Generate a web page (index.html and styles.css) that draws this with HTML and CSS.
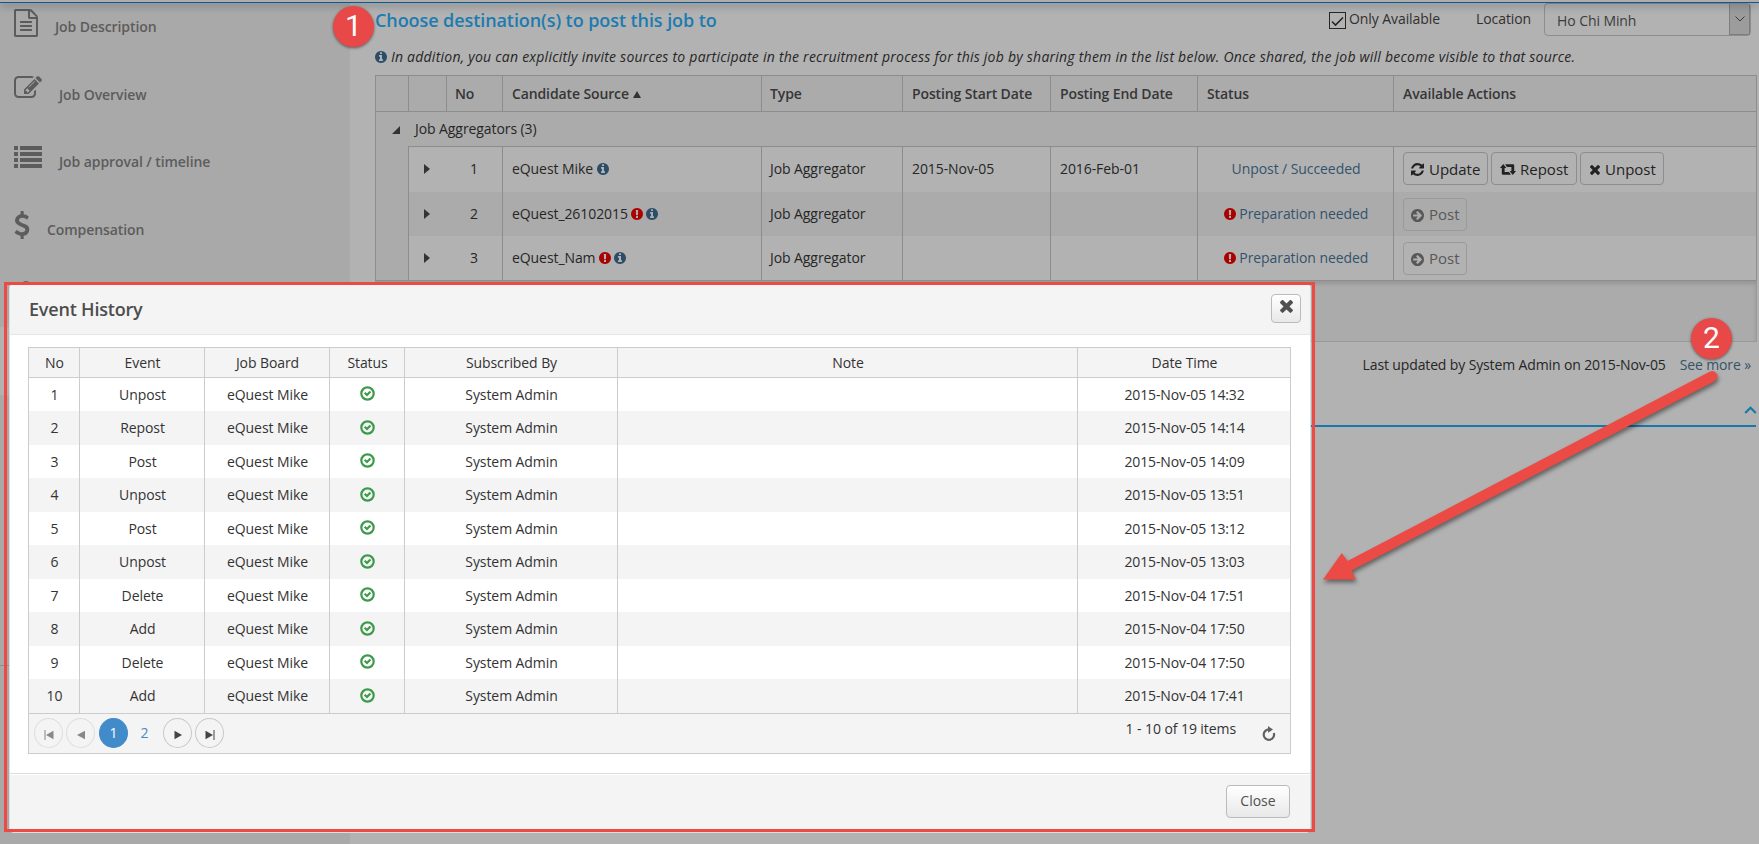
FILE: index.html
```html
<!DOCTYPE html>
<html lang="en">
<head>
  <meta charset="UTF-8" />
  <title>Event History</title>
  <meta name="viewport" content="width=device-width, initial-scale=1.0" />
  <link rel="stylesheet" href="styles.css">
</head>
<body>
  <svg class="sprite">
    <symbol id="i-file" viewBox="0 0 1792 1792"><path d="M1596 380q28 28 48 76t20 88v1152q0 40-28 68t-68 28h-1344q-40 0-68-28t-28-68v-1600q0-40 28-68t68-28h896q40 0 88 20t76 48zm-444-244v376h376q-10-29-22-41l-313-313q-12-12-41-22zm384 1528v-1024h-416q-40 0-68-28t-28-68v-416h-768v1536h1280zm-1024-864q0-14 9-23t23-9h704q14 0 23 9t9 23v64q0 14-9 23t-23 9h-704q-14 0-23-9t-9-23v-64zm736 224q14 0 23 9t9 23v64q0 14-9 23t-23 9h-704q-14 0-23-9t-9-23v-64q0-14 9-23t23-9h704zm0 256q14 0 23 9t9 23v64q0 14-9 23t-23 9h-704q-14 0-23-9t-9-23v-64q0-14 9-23t23-9h704z"/></symbol>
    <symbol id="i-edit" viewBox="0 0 1792 1792"><path d="M888 1184l116-116-152-152-116 116v56h96v96h56zm440-720q-16-16-33 1l-350 350q-17 17-1 33t33-1l350-350q17-17 1-33zm80 594v190q0 119-84.5 203.5t-203.5 84.5h-832q-119 0-203.5-84.5t-84.5-203.5v-832q0-119 84.5-203.5t203.5-84.5h832q63 0 117 25 15 7 18 23 3 17-9 29l-49 49q-14 14-32 8-23-6-45-6h-832q-66 0-113 47t-47 113v832q0 66 47 113t113 47h832q66 0 113-47t47-113v-126q0-13 9-22l64-64q15-15 35-7t20 29zm-96-738l288 288-672 672h-288v-288zm444 132l-92 92-288-288 92-92q28-28 68-28t68 28l152 152q28 28 28 68t-28 68z"/></symbol>
    <symbol id="i-list" viewBox="0 0 28 22"><path d="M0 0h4v4H0zM6 0h22v4H6zM0 6h4v4H0zM6 6h22v4H6zM0 12h4v4H0zM6 12h22v4H6zM0 18h4v4H0zM6 18h22v4H6z"/></symbol>
    <symbol id="i-dollar" viewBox="0 0 1792 1792"><path d="M1362 1185q0 153-99.5 263.5t-258.5 136.5v175q0 14-9 23t-23 9h-135q-13 0-22.5-9.5t-9.5-22.5v-175q-66-9-127.5-31t-101.5-44.5-74-48-46.5-37.5-17.5-18q-17-21-2-41l103-135q7-10 23-12 15-2 24 9l2 2q113 99 243 125 37 8 74 8 81 0 142.5-43t61.5-122q0-28-15-53t-33.5-42-58.5-37.5-66-32-80-32.5q-39-16-61.5-25t-61.5-26.5-62.5-31-56.5-35.5-53.5-42.5-43.5-49-35.5-58-21-66.5-8.5-78q0-138 98-242t255-134v-180q0-13 9.5-22.5t22.5-9.5h135q14 0 23 9t9 23v176q57 6 110.5 23t87 33.5 63.5 37.5 39 29 15 14q17 18 5 38l-81 146q-8 15-23 16-14 3-27-7-3-3-14.5-12t-39-26.5-58.5-32-74.5-26-85.5-11.5q-95 0-155 43t-60 111q0 26 8.500 48t29.500 41.500 39.500 33 56 31 60.500 27 70 27.500q53 20 81 31.500t76 35 75.500 42.500 62 50 53 63.500 31.500 76.500 13 94z"/></symbol>
    <symbol id="i-info" viewBox="128 128 1536 1536"><path d="M1152 1376v-160q0-14-9-23t-23-9h-96v-512q0-14-9-23t-23-9h-320q-14 0-23 9t-9 23v160q0 14 9 23t23 9h96v320h-96q-14 0-23 9t-9 23v160q0 14 9 23t23 9h448q14 0 23-9t9-23zm-128-896v-160q0-14-9-23t-23-9h-192q-14 0-23 9t-9 23v160q0 14 9 23t23 9h192q14 0 23-9t9-23zm640 416q0 209-103 385.5t-279.5 279.5-385.5 103-385.5-103-279.5-279.5-103-385.5 103-385.5 279.5-279.5 385.5-103 385.5 103 279.5 279.5 103 385.5z"/></symbol>
    <symbol id="i-warn" viewBox="128 128 1536 1536"><path d="M896 128q209 0 385.5 103t279.5 279.5 103 385.5-103 385.5-279.5 279.5-385.5 103-385.5-103-279.5-279.5-103-385.5 103-385.5 279.5-279.5 385.5-103zm128 1247v-190q0-14-9-23.5t-22-9.5h-192q-13 0-23 10t-10 23v190q0 13 10 23t23 10h192q13 0 22-9.5t9-23.5zm-2-344l18-621q0-12-10-18-10-8-24-8h-220q-14 0-24 8-10 6-10 18l17 621q0 10 10 17.5t24 7.5h185q14 0 23.5-7.5t10.5-17.5z"/></symbol>
    <symbol id="i-refresh" viewBox="128 128 1536 1536"><path d="M1639 1056q0 5-1 7-64 268-268 434.5t-478 166.5q-146 0-282.5-55t-243.5-157l-129 129q-19 19-45 19t-45-19-19-45v-448q0-26 19-45t45-19h448q26 0 45 19t19 45-19 45l-137 137q71 66 161 102t187 36q134 0 250-65t186-179q11-17 53-117 8-23 30-23h192q13 0 22.5 9.5t9.5 22.5zm25-800v448q0 26-19 45t-45 19h-448q-26 0-45-19t-19-45 19-45l138-138q-148-137-349-137-134 0-250 65t-186 179q-11 17-53 117-8 23-30 23h-199q-13 0-22.5-9.5t-9.5-22.5v-7q65-268 270-434.5t480-166.5q146 0 284 55.5t245 156.5l130-129q19-19 45-19t45 19 19 45z"/></symbol>
    <symbol id="i-retweet" viewBox="0 0 16 11"><path d="M3.200 0L6.400 4H4.600V8H9L11 10.800H3Q1.800 10.800 1.800 9.800V4H0zM12.800 11L9.600 7H11.400V3H7L5 .2H13Q14.200 .2 14.200 1.200V7H16z"/></symbol>
    <symbol id="i-times" viewBox="302 374 1188 1188"><path d="M1490 1322q0 40-28 68l-136 136q-28 28-68 28t-68-28l-294-294-294 294q-28 28-68 28t-68-28l-136-136q-28-28-28-68t28-68l294-294-294-294q-28-28-28-68t28-68l136-136q28-28 68-28t68 28l294 294 294-294q28-28 68-28t68 28l136 136q28 28 28 68t-28 68l-294 294 294 294q28 28 28 68z"/></symbol>
    <symbol id="i-arrow" viewBox="128 128 1536 1536"><path d="M1413 896q0-27-18-45l-91-91-362-362q-18-18-45-18t-45 18l-91 91q-18 18-18 45t18 45l189 189h-502q-26 0-45 19t-19 45v128q0 26 19 45t45 19h502l-189 189q-19 19-19 45t19 45l91 91q18 18 45 18t45-18l362-362 91-91q18-18 18-45zm251 0q0 209-103 385.5t-279.5 279.5-385.5 103-385.5-103-279.5-279.5-103-385.5 103-385.5 279.5-279.5 385.5-103 385.5 103 279.5 279.5 103 385.5z"/></symbol>
    <symbol id="i-ok" viewBox="0 0 15 15"><circle cx="7.5" cy="7.5" r="6.2" fill="none" stroke="currentColor" stroke-width="2.2"/><path d="M3.900 7.600L5.400 6.100L6.900 7.400L9.700 4.700L11.200 6.200L7 10.500z"/></symbol>
  </svg>

  <div class="page">
    <div class="topbar"></div>
    <aside>
      <a class="nav file"><svg><use href="#i-file"/></svg>Job Description</a>
      <a class="nav edit"><svg><use href="#i-edit"/></svg>Job Overview</a>
      <a class="nav list"><svg><use href="#i-list"/></svg>Job approval / timeline</a>
      <a class="nav dollar"><svg><use href="#i-dollar"/></svg>Compensation</a>
      <div class="nav-more"></div>
      <div class="nav-active"></div>
      <div class="nav-rest"></div>
    </aside>

    <main>
      <div class="heading">
        <h2>Choose destination(s) to post this job to</h2>
        <span class="check"><svg viewBox="0 0 15 15"><path d="M2 8.500l3.500 3.500 7.500-7.500" fill="none" stroke="currentColor" stroke-width="1.600"/></svg></span>
        <label>Only Available</label>
        <label class="loc">Location</label>
        <div class="select"><span>Ho Chi Minh</span><i><svg viewBox="0 0 10 6"><path d="M.5.5L5 5 9.500.5" fill="none" stroke="currentColor"/></svg></i></div>
      </div>
      <p class="hint"><svg class="ico info"><use href="#i-info"/></svg> <em>In addition, you can explicitly invite sources to participate in the recruitment process for this job by sharing them in the list below. Once shared, the job will become visible to that source.</em></p>

      <table class="sources">
        <colgroup><col class="s1"><col class="s2"><col class="s3"><col class="s4"><col class="s5"><col class="s6"><col class="s7"><col class="s8"><col></colgroup>
        <tr class="head">
          <th></th><th></th><th>No</th><th>Candidate Source <i class="sort"></i></th><th>Type</th><th>Posting Start Date</th><th>Posting End Date</th><th>Status</th><th>Available Actions</th>
        </tr>
        <tr class="group"><td colspan="9"><i class="open"></i>Job Aggregators (3)</td></tr>
        <tr class="r1">
          <td></td><td><i class="closed"></i></td><td>1</td><td>eQuest Mike <svg class="ico info"><use href="#i-info"/></svg></td><td>Job Aggregator</td><td>2015-Nov-05</td><td>2016-Feb-01</td>
          <td><a>Unpost / Succeeded</a></td>
          <td><div class="actions"><button class="upd"><svg><use href="#i-refresh"/></svg>Update</button><button class="rep"><svg><use href="#i-retweet"/></svg>Repost</button><button class="unp"><svg><use href="#i-times"/></svg>Unpost</button></div></td>
        </tr>
        <tr class="r2">
          <td></td><td><i class="closed"></i></td><td>2</td><td>eQuest_26102015 <svg class="ico warn"><use href="#i-warn"/></svg><svg class="ico info next"><use href="#i-info"/></svg></td><td>Job Aggregator</td><td></td><td></td>
          <td><svg class="ico warn"><use href="#i-warn"/></svg> <a>Preparation needed</a></td>
          <td><div class="actions"><button class="post" disabled><svg><use href="#i-arrow"/></svg>Post</button></div></td>
        </tr>
        <tr class="r3">
          <td></td><td><i class="closed"></i></td><td>3</td><td>eQuest_Nam <svg class="ico warn"><use href="#i-warn"/></svg><svg class="ico info next"><use href="#i-info"/></svg></td><td>Job Aggregator</td><td></td><td></td>
          <td><svg class="ico warn"><use href="#i-warn"/></svg> <a>Preparation needed</a></td>
          <td><div class="actions"><button class="post" disabled><svg><use href="#i-arrow"/></svg>Post</button></div></td>
        </tr>
      </table>
      <div class="sources-foot"></div>
      <p class="updated"><span>Last updated by System Admin on 2015-Nov-05</span><a>See more »</a></p>
      <div class="section"><svg viewBox="0 0 13 8"><path d="M1.200 7L6.500 1.800 11.800 7" fill="none" stroke="currentColor" stroke-width="2.200"/></svg></div>
    </main>
  </div>

  <div class="modal">
    <header>
      <h3>Event History</h3>
      <button class="x"><svg><use href="#i-times"/></svg></button>
    </header>
    <div class="body">
      <table class="events">
        <colgroup><col class="c1"><col class="c2"><col class="c2"><col class="c3"><col class="c4"><col><col class="c4"></colgroup>
        <thead><tr><th>No</th><th>Event</th><th>Job Board</th><th>Status</th><th>Subscribed By</th><th>Note</th><th>Date Time</th></tr></thead>
        <tbody id="events"></tbody>
      </table>
      <div class="pager">
        <span class="pg off"><svg viewBox="0 0 10 10"><path d="M.5 0h1v10h-1zM9.500 .8v8.400L2 5z"/></svg></span>
        <span class="pg off"><svg viewBox="0 0 10 10"><path d="M9 .8v8.400L1 5z"/></svg></span>
        <span class="pg current">1</span>
        <span class="pg num">2</span>
        <span class="pg"><svg viewBox="0 0 10 10"><path d="M1.500 .8v8.400L9 5z"/></svg></span>
        <span class="pg"><svg viewBox="0 0 10 10"><path d="M8.500 0h1v10h-1zM.5 .8v8.400L8 5z"/></svg></span>
        <span class="count">1 - 10 of 19 items</span>
        <svg class="reload" viewBox="0 0 14 15"><path d="M7.500 3.500A5.200 5.200 0 1 0 11.800 7" fill="none" stroke="currentColor" stroke-width="2.200"/><path d="M6 0L11 3.600 6 6.800z"/></svg>
      </div>
    </div>
    <footer><button>Close</button></footer>
  </div>

  <div class="frame"></div>
  <div class="step one">1</div>
  <svg class="pointer" viewBox="0 0 420 230">
    <path d="M387 6.500L24.500 196L18.800 188L0 214.500H33L28.500 205.500L391 16.500Q396 13 394 9Q391 4.500 387 6.500z"/>
  </svg>
  <div class="step two">2</div>

  <script>
    const events = [
      ['Unpost', '2015-Nov-05 14:32'],
      ['Repost', '2015-Nov-05 14:14'],
      ['Post', '2015-Nov-05 14:09'],
      ['Unpost', '2015-Nov-05 13:51'],
      ['Post', '2015-Nov-05 13:12'],
      ['Unpost', '2015-Nov-05 13:03'],
      ['Delete', '2015-Nov-04 17:51'],
      ['Add', '2015-Nov-04 17:50'],
      ['Delete', '2015-Nov-04 17:50'],
      ['Add', '2015-Nov-04 17:41']
    ];

    const body = document.getElementById('events');
    events.forEach(([event, time], i) => {
      const row = document.createElement('tr');
      row.innerHTML = `
        <td>${i + 1}</td>
        <td>${event}</td>
        <td>eQuest Mike</td>
        <td><svg class="ok"><use href="#i-ok"/></svg></td>
        <td>System Admin</td>
        <td></td>
        <td>${time}</td>
      `;
      body.appendChild(row);
    });
  </script>
</body>
</html>
```

FILE: styles.css
```css
* {
  box-sizing: border-box;
}
body {
  margin: 0;
  width: 1759px;
  height: 844px;
  overflow: hidden;
  position: relative;
  font-family: 'Open Sans', sans-serif;
  font-size: 14px;
  line-height: 20px;
  letter-spacing: -0.08px;
  color: #262626;
  background: #b2b2b2;
}
h2, h3, p {
  margin: 0;
}
svg {
  fill: currentColor;
}
button {
  font-family: inherit;
}
.sprite {
  display: none;
}
.page {
  display: flex;
  height: 844px;
}
.topbar {
  position: absolute;
  top: 0;
  left: 0;
  width: 100%;
  height: 3px;
  background: #aeaeae;
  border-bottom: 1px solid #0a5a96;
  box-shadow: 0 2px 8px rgba(0, 0, 0, 0.4);
}

/* left menu */
aside {
  width: 350px;
  background: #a9a9a9;
  color: #5c5c5c;
  padding-top: 3px;
}
.nav {
  display: flex;
  height: 68px;
  padding-left: 14px;
  font-weight: 600;
}
.nav svg {
  flex: none;
}
.file {
  padding-top: 14px;
  height: 67px;
}
.file svg {
  width: 28px;
  height: 28px;
  margin: -8px 15px 0 -2px;
}
.edit {
  padding-top: 15px;
}
.edit svg {
  width: 28px;
  height: 28px;
  margin: -11px 17px 0 0;
}
.list {
  padding-top: 14px;
}
.list svg {
  width: 28px;
  height: 22px;
  margin: -6px 17px 0 0;
}
.dollar {
  padding-top: 14px;
}
.dollar svg {
  width: 28px;
  height: 28px;
  margin: -9px 11px 0 -6px;
}
.nav-more {
  width: 10px;
  height: 10px;
  margin: 7px 0 0 21px;
  border-radius: 5px;
  background: #666;
}
.nav-active {
  height: 68px;
  margin-top: 36px;
  background: #b2b2b2;
}
.nav-rest {
  height: 271px;
  border-bottom: 1px solid #8d8d8d;
}

/* right part */
main {
  width: 1382px;
  margin-left: 25px;
}
.heading {
  display: flex;
  height: 36px;
}
.heading h2 {
  font-size: 18px;
  font-weight: 600;
  line-height: 24px;
  padding-top: 8px;
  width: 954px;
  color: #1c7bb0;
}
.check {
  width: 17px;
  height: 17px;
  margin: 12px 3px 0 0;
  border: 1px solid #262626;
}
.check svg {
  display: block;
  width: 15px;
  height: 15px;
}
.heading label {
  padding-top: 9px;
  width: 127px;
  color: #303030;
}
.heading .loc {
  width: 68px;
}
.select {
  display: flex;
  justify-content: space-between;
  width: 207px;
  height: 33px;
  margin-top: 3px;
  border: 1px solid #8d8d8d;
  border-radius: 4px;
  padding-left: 12px;
  line-height: 33px;
  color: #3c3c3c;
}
.select i {
  width: 21px;
  background: #9c9c9c;
  border: 1px solid #7d7d7d;
  border-top: 0;
  display: flex;
  align-items: center;
  justify-content: center;
}
.select i svg {
  width: 10px;
  height: 6px;
}
.hint {
  height: 39px;
  padding-top: 11px;
  white-space: nowrap;
  letter-spacing: 0.235px;
}
.ico {
  width: 12px;
  height: 12px;
  vertical-align: -1px;
}
.info {
  color: #2b4d68;
}
.warn {
  color: #ab0000;
}
.next {
  margin-left: 3px;
}
.sources {
  table-layout: fixed;
  width: 1382px;
  border-spacing: 0;
  border-right: 1px solid #8d8d8d;
}
.s1 { width: 33px; }
.s2 { width: 38px; }
.s3 { width: 56px; }
.s4 { width: 259px; }
.s5 { width: 141px; }
.s6 { width: 148px; }
.s7 { width: 147px; }
.s8 { width: 196px; }
.sources th, .sources td {
  padding: 0 0 0 9px;
  text-align: left;
  border-left: 1px solid #8d8d8d;
}
.sources th {
  height: 37px;
  font-weight: 600;
  letter-spacing: -0.12px;
  color: #363636;
  border-top: 1px solid #8d8d8d;
  border-bottom: 1px solid #8d8d8d;
}
.head, .group, .r2 {
  background: #ababab;
}
.sources th:nth-child(3) {
  padding-left: 8px;
}
.sources th:nth-child(5), .sources td:nth-child(5) {
  padding-left: 8px;
}
.group td {
  height: 34px;
}
.sources .r1 td {
  height: 46px;
  padding-bottom: 2px;
  border-top: 1px solid #8d8d8d;
}
.r2 td {
  height: 44px;
}
.r3 td {
  height: 45px;
  border-bottom: 1px solid #8d8d8d;
}
.sources td:first-child {
  background: #ababab;
}
.sources .r1 td:first-child {
  border-top: 0;
}
.sources td:nth-child(2) {
  padding-left: 15px;
}
.sources td:nth-child(3) {
  border-left: 0;
  text-align: center;
  padding-left: 0;
}
.sources td:nth-child(8) {
  text-align: center;
  padding-left: 1px;
}
.sources a, .updated a {
  color: #34536b;
}
.sort {
  display: inline-block;
  border: 4px solid transparent;
  border-top: 0;
  border-bottom: 7px solid #333;
  margin-left: 1px;
  vertical-align: 1px;
}
.open {
  display: inline-block;
  border-left: 8px solid transparent;
  border-bottom: 8px solid #333;
  margin: 0 15px 0 7px;
}
.closed {
  display: block;
  width: 0;
  border: 5px solid transparent;
  border-left: 6px solid #333;
  border-right: 0;
}
.actions {
  display: flex;
  gap: 3px;
}
.actions button {
  height: 33px;
  padding: 0 0 0 7px;
  border: 1px solid #8d8d8d;
  border-radius: 4px;
  background: transparent;
  font-size: 15px;
  color: #222;
  display: flex;
  align-items: center;
}
.actions .upd { width: 85px; }
.actions .rep { width: 86px; padding-left: 8px; }
.actions .unp { width: 84px; padding-left: 9px; }
.actions .post {
  width: 64px;
  color: #585858;
  border-color: #9a9a9a;
}
.actions svg {
  width: 13px;
  height: 13px;
  margin: 2px 5px 0 0;
}
.actions .rep svg {
  width: 16px;
  height: 11px;
  margin-right: 4px;
}
.actions .unp svg {
  width: 10px;
  height: 10px;
}
.sources-foot {
  height: 61px;
  background: #ababab;
  border: 1px solid #999;
  border-top: 0;
  box-shadow: inset 0 3px 4px rgba(0, 0, 0, 0.12);
}
.updated {
  display: flex;
  justify-content: flex-end;
  gap: 14px;
  padding: 13px 6px 0 0;
  letter-spacing: -0.13px;
}
.section {
  width: 1381px;
  height: 52px;
  border-bottom: 2px solid #1878ab;
  color: #1878ab;
  display: flex;
  justify-content: flex-end;
}
.section svg {
  width: 13px;
  height: 8px;
  margin: 31px -1px 0 0;
}

/* popup */
.modal {
  position: absolute;
  left: 9px;
  top: 283px;
  width: 1302px;
  height: 550px;
  border: 1px solid #ddd;
  border-radius: 5px;
  background: #fff;
  color: #333;
  overflow: hidden;
  display: flex;
  flex-direction: column;
}
.modal header {
  height: 51px;
  background: #f4f4f4;
  border-bottom: 1px solid #e5e5e5;
  display: flex;
  justify-content: space-between;
  padding: 0 19px 0 19px;
}
.modal h3 {
  font-size: 18px;
  font-weight: 600;
  line-height: 24px;
  letter-spacing: -0.2px;
  padding-top: 13px;
  color: #4d4d4d;
}
.modal button {
  border: 1px solid #bbb;
  border-radius: 4px;
  background: linear-gradient(#fff, #e8e8e8);
  color: #505050;
  padding: 0;
}
.modal .x {
  width: 30px;
  height: 29px;
  margin: 10px -10px 0 0;
  padding-bottom: 2px;
}
.x svg {
  width: 13px;
  height: 13px;
}
.body {
  width: 1263px;
  margin: 12px 0 0 18px;
  border: 1px solid #ccc;
  border-left: 0;
}
.events {
  table-layout: fixed;
  width: 1262px;
  border-spacing: 0;
}
.c1 { width: 51px; }
.c2 { width: 125px; }
.c3 { width: 75px; }
.c4 { width: 213px; }
.events th, .events td {
  padding: 0 0 0 1px;
  text-align: center;
  font-weight: 400;
  border-left: 1px solid #ccc;
}
.events th {
  height: 30px;
  background: #f4f4f4;
  border-bottom: 1px solid #ccc;
}
.events td {
  height: 33px;
}
.events td:last-child {
  letter-spacing: -0.13px;
}
.events tr:nth-child(even) td {
  height: 34px;
  background: #f4f4f4;
}
.ok {
  width: 15px;
  height: 15px;
  display: block;
  margin: -2px auto 0;
  color: #3c9a4b;
}
.pager {
  height: 40px;
  background: #f4f4f4;
  border: 1px solid #ccc;
  border-width: 1px 0 0 1px;
  display: flex;
  gap: 3px;
  padding: 4px 14px 0 5px;
}
.pg {
  width: 29px;
  height: 30px;
  border: 1px solid #c8c8c8;
  border-radius: 50%;
  display: flex;
  align-items: center;
  justify-content: center;
  color: #444;
}
.pg svg {
  width: 10px;
  height: 10px;
  margin-top: 4px;
}
.off {
  border-color: #ddd;
  color: #888;
}
.current {
  background: #428bca;
  border-color: #428bca;
  color: #fff;
  margin-left: 1px;
}
.num {
  width: 27px;
  border: 0;
  color: #428bca;
  margin-right: 2px;
}
.count {
  margin: 1px 23px 0 auto;
}
.reload {
  width: 14px;
  height: 15px;
  margin-top: 8px;
  color: #606060;
}
.modal footer {
  margin-top: 19px;
  flex: 1;
  background: #f4f4f4;
  border-top: 1px solid #ddd;
  box-shadow: inset 0 1px 0 #fff;
  display: flex;
  justify-content: flex-end;
}
.modal footer button {
  width: 64px;
  height: 33px;
  margin: 11px 20px 0 0;
  padding-bottom: 2px;
  font-size: 14px;
}

/* callouts */
.frame {
  position: absolute;
  left: 4px;
  top: 282px;
  width: 1311px;
  height: 550px;
  border: 3px solid #eb4a45;
}
.step {
  position: absolute;
  width: 41px;
  height: 41px;
  border-radius: 50%;
  background: #e94848;
  color: #fff;
  font: 30px/40px Roboto, sans-serif;
  text-align: center;
  box-shadow: 0 1px 3px rgba(0, 0, 0, 0.5);
}
.one {
  left: 333px;
  top: 6px;
}
.two {
  left: 1691px;
  top: 318px;
}
.pointer {
  position: absolute;
  left: 1323px;
  top: 365px;
  width: 420px;
  height: 230px;
  color: #eb4a45;
  filter: drop-shadow(1px 3px 2px rgba(0, 0, 0, 0.45));
}
```
